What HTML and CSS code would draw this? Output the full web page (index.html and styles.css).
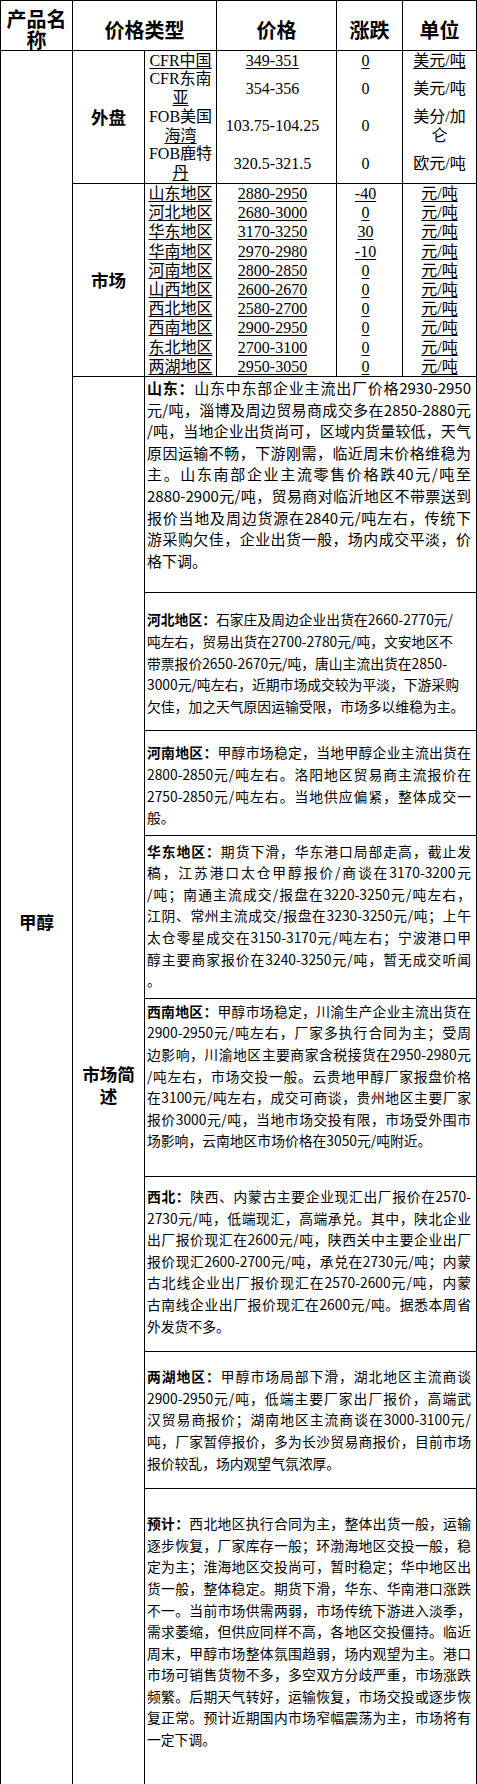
FILE: index.html
```html
<!DOCTYPE html>
<html lang="zh-CN">
<head>
<meta charset="utf-8">
<title>甲醇价格</title>
<link rel="stylesheet" href="styles.css">
</head>
<body>
<table class="price">
<colgroup>
<col class="c1"><col class="c2"><col class="c3"><col class="c4"><col class="c5"><col class="c6">
</colgroup>
<thead>
<tr><th>产品名称</th><th colspan="2">价格类型</th><th>价格</th><th>涨跌</th><th>单位</th></tr>
</thead>
<tbody>
<tr class="first">
<td class="lbl" rowspan="22">甲醇</td>
<td class="lbl" rowspan="4">外盘</td>
<td class="d"><span class="ul">CFR中国</span></td><td class="d n"><span class="ul">349-351</span></td><td class="d n"><span class="ul">0</span></td><td class="d"><span class="ul">美元/吨</span></td>
</tr>
<tr class="two"><td class="d">CFR东南<br><span class="ul">亚</span></td><td class="d n">354-356</td><td class="d n">0</td><td class="d">美元/吨</td></tr>
<tr class="two"><td class="d">FOB美国<br><span class="ul">海湾</span></td><td class="d n">103.75-104.25</td><td class="d n">0</td><td class="d">美分/加<br>仑</td></tr>
<tr class="two"><td class="d">FOB鹿特<br><span class="ul">丹</span></td><td class="d n">320.5-321.5</td><td class="d n">0</td><td class="d">欧元/吨</td></tr>
<tr class="first">
<td class="lbl" rowspan="10">市场</td>
<td class="d"><span class="ul">山东地区</span></td><td class="d n"><span class="ul">2880-2950</span></td><td class="d n"><span class="ul">-40</span></td><td class="d"><span class="ul">元/吨</span></td>
</tr>
<tr><td class="d"><span class="ul">河北地区</span></td><td class="d n"><span class="ul">2680-3000</span></td><td class="d n"><span class="ul">0</span></td><td class="d"><span class="ul">元/吨</span></td></tr>
<tr><td class="d"><span class="ul">华东地区</span></td><td class="d n"><span class="ul">3170-3250</span></td><td class="d n"><span class="ul">30</span></td><td class="d"><span class="ul">元/吨</span></td></tr>
<tr><td class="d"><span class="ul">华南地区</span></td><td class="d n"><span class="ul">2970-2980</span></td><td class="d n"><span class="ul">-10</span></td><td class="d"><span class="ul">元/吨</span></td></tr>
<tr><td class="d"><span class="ul">河南地区</span></td><td class="d n"><span class="ul">2800-2850</span></td><td class="d n"><span class="ul">0</span></td><td class="d"><span class="ul">元/吨</span></td></tr>
<tr><td class="d"><span class="ul">山西地区</span></td><td class="d n"><span class="ul">2600-2670</span></td><td class="d n"><span class="ul">0</span></td><td class="d"><span class="ul">元/吨</span></td></tr>
<tr><td class="d"><span class="ul">西北地区</span></td><td class="d n"><span class="ul">2580-2700</span></td><td class="d n"><span class="ul">0</span></td><td class="d"><span class="ul">元/吨</span></td></tr>
<tr><td class="d"><span class="ul">西南地区</span></td><td class="d n"><span class="ul">2900-2950</span></td><td class="d n"><span class="ul">0</span></td><td class="d"><span class="ul">元/吨</span></td></tr>
<tr><td class="d"><span class="ul">东北地区</span></td><td class="d n"><span class="ul">2700-3100</span></td><td class="d n"><span class="ul">0</span></td><td class="d"><span class="ul">元/吨</span></td></tr>
<tr><td class="d"><span class="ul">两湖地区</span></td><td class="d n"><span class="ul">2950-3050</span></td><td class="d n"><span class="ul">0</span></td><td class="d"><span class="ul">元/吨</span></td></tr>
<tr>
<td class="lbl" rowspan="8">市场简述</td>
<td class="desc r1 big" colspan="4">
<span class="ln"><b>山东：</b>山东中东部企业主流出厂价格2930-2950</span>
<span class="ln">元/吨，淄博及周边贸易商成交多在2850-2880元</span>
<span class="ln">/吨，当地企业出货尚可，区域内货量较低，天气</span>
<span class="ln">原因运输不畅，下游刚需，临近周末价格维稳为</span>
<span class="ln">主。山东南部企业主流零售价格跌40元/吨至</span>
<span class="ln">2880-2900元/吨，贸易商对临沂地区不带票送到</span>
<span class="ln">报价当地及周边货源在2840元/吨左右，传统下</span>
<span class="ln">游采购欠佳，企业出货一般，场内成交平淡，价</span>
<span class="ln end">格下调。</span>
</td>
</tr>
<tr>
<td class="desc r2 plain" colspan="4">
<span class="ln"><b>河北地区：</b>石家庄及周边企业出货在2660-2770元/</span>
<span class="ln">吨左右，贸易出货在2700-2780元/吨，文安地区不</span>
<span class="ln">带票报价2650-2670元/吨，唐山主流出货在2850-</span>
<span class="ln">3000元/吨左右，近期市场成交较为平淡，下游采购</span>
<span class="ln">欠佳，加之天气原因运输受限，市场多以维稳为主。</span>
</td>
</tr>
<tr>
<td class="desc r3" colspan="4">
<span class="ln"><b>河南地区：</b>甲醇市场稳定，当地甲醇企业主流出货在</span>
<span class="ln">2800-2850元/吨左右。洛阳地区贸易商主流报价在</span>
<span class="ln">2750-2850元/吨左右。当地供应偏紧，整体成交一</span>
<span class="ln end">般。</span>
</td>
</tr>
<tr>
<td class="desc r4" colspan="4">
<span class="ln"><b>华东地区：</b>期货下滑，华东港口局部走高，截止发</span>
<span class="ln">稿，江苏港口太仓甲醇报价/商谈在3170-3200元</span>
<span class="ln">/吨；南通主流成交/报盘在3220-3250元/吨左右，</span>
<span class="ln">江阴、常州主流成交/报盘在3230-3250元/吨；上午</span>
<span class="ln">太仓零星成交在3150-3170元/吨左右；宁波港口甲</span>
<span class="ln">醇主要商家报价在3240-3250元/吨，暂无成交听闻</span>
<span class="ln end">。</span>
</td>
</tr>
<tr>
<td class="desc r5" colspan="4">
<span class="ln"><b>西南地区：</b>甲醇市场稳定，川渝生产企业主流出货在</span>
<span class="ln">2900-2950元/吨左右，厂家多执行合同为主；受周</span>
<span class="ln">边影响，川渝地区主要商家含税接货在2950-2980元</span>
<span class="ln">/吨左右，市场交投一般。云贵地甲醇厂家报盘价格</span>
<span class="ln">在3100元/吨左右，成交可商谈，贵州地区主要厂家</span>
<span class="ln">报价3000元/吨，当地市场交投有限，市场受外围市</span>
<span class="ln end">场影响，云南地区市场价格在3050元/吨附近。</span>
</td>
</tr>
<tr>
<td class="desc r6" colspan="4">
<span class="ln"><b>西北：</b>陕西、内蒙古主要企业现汇出厂报价在2570-</span>
<span class="ln">2730元/吨，低端现汇，高端承兑。其中，陕北企业</span>
<span class="ln">出厂报价现汇在2600元/吨，陕西关中主要企业出厂</span>
<span class="ln">报价现汇2600-2700元/吨，承兑在2730元/吨；内蒙</span>
<span class="ln">古北线企业出厂报价现汇在2570-2600元/吨，内蒙</span>
<span class="ln">古南线企业出厂报价现汇在2600元/吨。据悉本周省</span>
<span class="ln end">外发货不多。</span>
</td>
</tr>
<tr>
<td class="desc r7" colspan="4">
<span class="ln"><b>两湖地区：</b>甲醇市场局部下滑，湖北地区主流商谈</span>
<span class="ln">2900-2950元/吨，低端主要厂家出厂报价，高端武</span>
<span class="ln">汉贸易商报价；湖南地区主流商谈在3000-3100元/</span>
<span class="ln">吨，厂家暂停报价，多为长沙贸易商报价，目前市场</span>
<span class="ln end">报价较乱，场内观望气氛浓厚。</span>
</td>
</tr>
<tr>
<td class="desc r8" colspan="4">
<span class="ln"><b>预计：</b>西北地区执行合同为主，整体出货一般，运输</span>
<span class="ln">逐步恢复，厂家库存一般；环渤海地区交投一般，稳</span>
<span class="ln">定为主；淮海地区交投尚可，暂时稳定；华中地区出</span>
<span class="ln">货一般，整体稳定。期货下滑，华东、华南港口涨跌</span>
<span class="ln">不一。当前市场供需两弱，市场传统下游进入淡季，</span>
<span class="ln">需求萎缩，但供应同样不高，各地区交投僵持。临近</span>
<span class="ln">周末，甲醇市场整体氛围趋弱，场内观望为主。港口</span>
<span class="ln">市场可销售货物不多，多空双方分歧严重，市场涨跌</span>
<span class="ln">频繁。后期天气转好，运输恢复，市场交投或逐步恢</span>
<span class="ln">复正常。预计近期国内市场窄幅震荡为主，市场将有</span>
<span class="ln end">一定下调。</span>
</td>
</tr>
</tbody>
</table>
</body>
</html>
```
FILE: styles.css
```css
html, body {
  margin: 0;
  padding: 0;
  background: #fff;
}

.price {
  border-collapse: collapse;
  table-layout: fixed;
  width: 476px;
  color: #000;
}

.c1, .c2, .c3 { width: 72px; }
.c4 { width: 120px; }
.c5 { width: 66px; }
.c6 { width: 74px; }

.price th,
.price td {
  border: 1px solid #000;
  padding: 0 3px;
  text-align: center;
  vertical-align: middle;
}

.price th {
  font-family: "Noto Sans CJK SC", sans-serif;
  font-weight: 700;
  font-size: 20px;
  line-height: 21px;
  padding: 7px 3px 0;
}

.lbl {
  font-family: "Noto Sans CJK SC", sans-serif;
  font-weight: 700;
  font-size: 17.5px;
  line-height: 22px;
}

.d {
  font-family: "Liberation Serif", "Noto Sans CJK SC", serif;
  font-size: 16px;
  line-height: 19.2px;
}

.price td.d {
  padding: 0;
  border-top: none;
  border-bottom: none;
}

.price .first td.d {
  border-top: 1px solid #000;
}

.price td.n {
  padding-right: 8px;
}

.two td.d {
  line-height: 18.8px;
}

.ul {
  text-decoration: underline;
  text-decoration-thickness: 1px;
  text-underline-offset: 2px;
}

.price td.desc {
  font-family: "Noto Sans CJK SC", sans-serif;
  font-size: 13.8px;
  line-height: 21.6px;
  text-align: left;
  vertical-align: top;
  padding: 0 5px 0 2px;
}

.price td.big {
  font-size: 15px;
}

.desc b {
  font-weight: 700;
}

.ln {
  display: block;
  text-align: justify;
  text-align-last: justify;
}

.ln.end,
.plain .ln {
  text-align-last: left;
}

.price td.r1 { padding-top: 0; padding-bottom: 21px; }
.price td.r2 { padding-top: 16px; padding-bottom: 13px; }
.price td.r3 { padding-top: 11px; padding-bottom: 6px; }
.price td.r4 { padding-top: 5px; padding-bottom: 6px; }
.price td.r5 { padding-top: 2px; padding-bottom: 24px; }
.price td.r6 { padding-top: 9px; padding-bottom: 14px; }
.price td.r7 { padding-top: 14px; padding-bottom: 14px; }
.price td.r8 { padding-top: 24px; padding-bottom: 42px; }
```
